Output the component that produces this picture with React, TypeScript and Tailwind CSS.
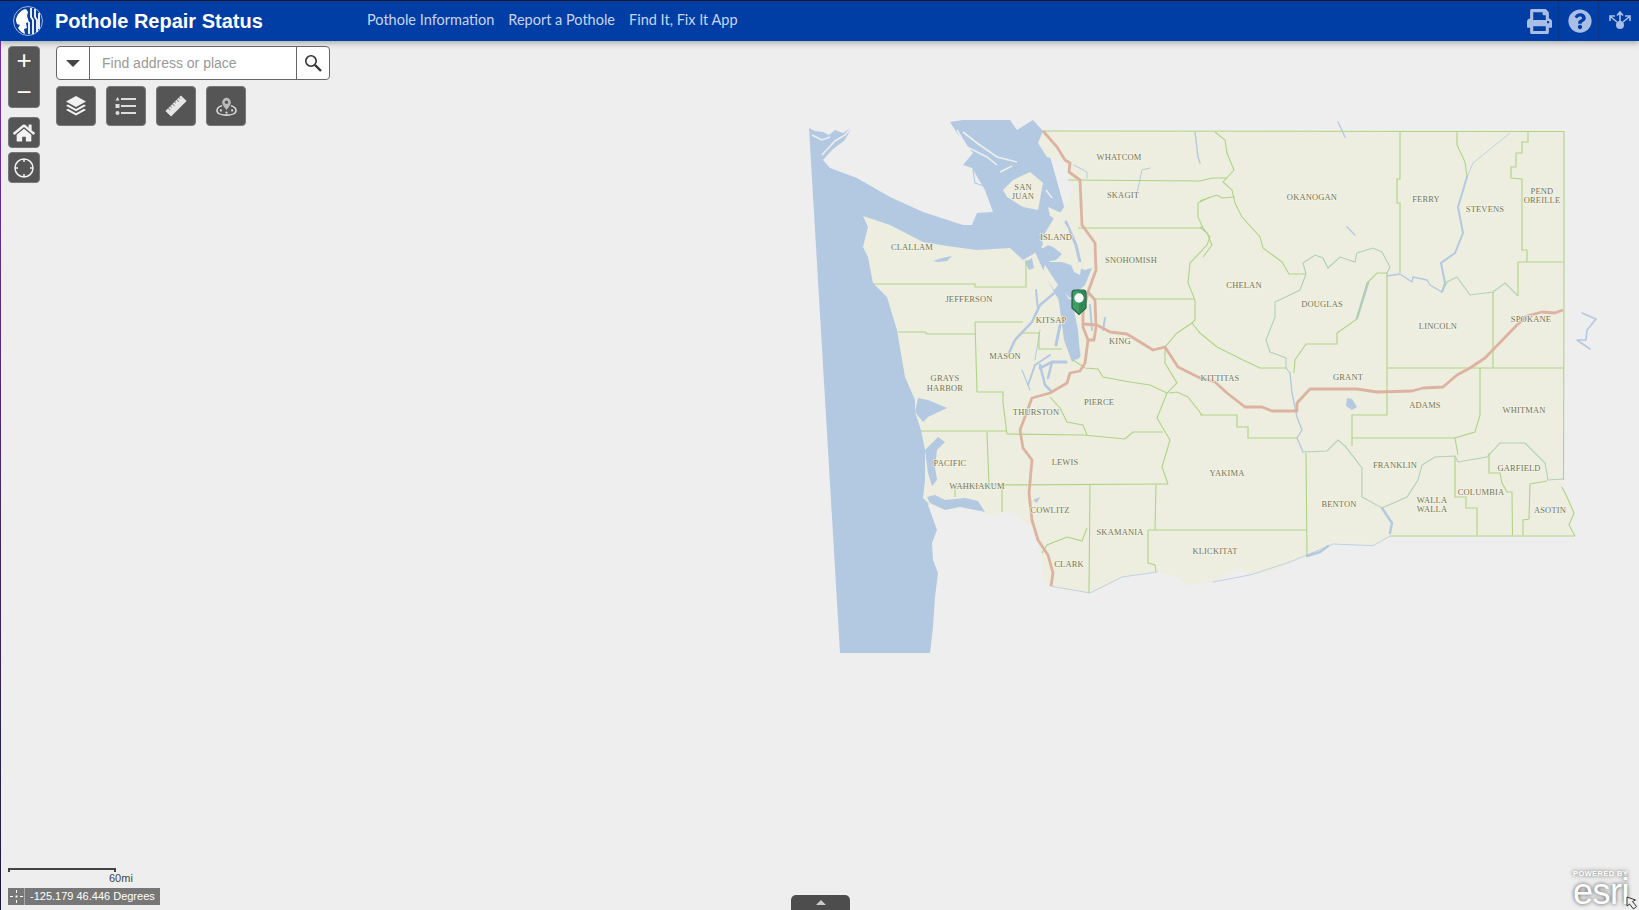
import React from "react";
import { FaHome, FaPrint, FaQuestionCircle } from "react-icons/fa";

const land =
  "1043,131 1564,131.5 1564,262 1563.5,480 1562,487 1567,497 1574,513 1569,525 1575,536 1390,536 1385,541 1373,545.7 1360,543 1333,544 1327,550 1307,556 1290,562 1275,571 1250,575 1238,569 1213,582 1187,586 1177,577 1157,572 1122,577 1110,585 1090,593 1067,590 1050,586 1043,580 1042,563 1038,543 1032,527 1013,513 1007,511 995,516 983,513 977,502 957,508 943,510 930,505 923,498 925,480 925,450 921,430 915,412 915,400 905,377 897,330 887,297 873,283 868,257 863,247 868,227 863,216 890,225 923,242 947,246 977,250 1010,248 1023,260 1040,250 1045,240 1060,213 1067,203 1073,187 1065,163 1047,157 1038,143";

const water =
  "809,128 815,131 823,132 829,135 835,130 843,133 852,127 845,140 832,150 823,160 830,168 857,178 890,197 923,212 963,225 972,225 977,213 993,212 985,190 972,168 963,165 973,153 957,133 950,122 963,120 1010,120 1017,130 1033,120 1043,131 1090,300 928,505 937,530 932,543 933,560 938,573 935,597 933,627 930,653 840,653";

const waterShapes = [
  "918,398 928,400 947,408 928,417 923,422 915,412",
  "925,450 938,437 945,442 937,450 935,467 937,480 932,486 928,473",
  "927,497 935,495 945,500 965,498 978,501 985,512 960,507 945,510 930,503",
  "1347,398 1352,399 1357,407 1352,410 1346,406",
  "1040,250 1060,238 1066,250 1056,260 1046,262",
  "933,261 942,258 952,256 947,261 938,262",
  "1025,262 1032,258 1034,268 1029,270",
  "1045,262 1062,262 1085,270 1092,268 1085,285 1070,298 1062,290",
  "1058,295 1072,300 1078,330 1080,355 1072,362 1064,340",
  "1033,500 1040,497 1037,503",
];

const channels: [string, number][] = [
  ["1040,252 1048,270 1058,290 1066,303 1070,320 1072,340 1076,355", 9],
  ["1066,222 1076,245 1080,262", 3],
  ["1058,290 1040,305 1032,322 1015,340 1008,355", 2.5],
  ["1036,290 1038,310", 2],
  ["1066,362 1052,362 1040,368", 3],
  ["1052,362 1048,378", 2.5],
  ["1050,355 1035,365 1028,385", 2],
  ["1040,365 1045,385 1052,392", 2.5],
  ["1022,370 1030,390", 1.2],
  ["1060,325 1056,345", 3],
  ["1090,305 1092,330", 2],
  ["1105,318 1103,330", 2],
  ["1074,165 1087,172 1087,178", 1],
  ["1150,168 1142,170 1137,193", 1],
  ["1195,132 1198,157 1200,163", 1.4],
  ["1338,122 1345,137", 1.4],
  ["1368,283 1357,318", 2.5],
  ["1467,177 1473,163 1510,133", 0.8],
  ["1467,177 1458,207 1463,233 1455,253 1441,263 1445,283 1442,292", 2],
  ["1387,276 1400,274 1412,282 1413,277 1427,280 1430,285 1442,292", 1.4],
  ["1347,227 1355,235", 1.4],
  ["1582,313 1596,319 1587,330 1586,340 1577,340 1590,349", 1.6],
  ["1290,373 1292,393 1297,417 1302,430 1297,438 1303,452", 1.4],
  ["1382,508 1392,523 1390,533", 2.4],
  ["1307,556 1320,552 1328,546", 2.4],
  ["1040,330 1035,360", 1],
  ["1390,536 1373,545.7 1333,544 1290,562 1250,575 1213,582", 0.8],
  ["1157,572 1122,577 1090,593 1050,586", 0.8],
  ["973,170 975,183 990,188 998,210", 1.2],
];

const islands = [
  "1003,190 1013,180 1030,172 1043,183 1038,210 1023,207 1007,197",
  "1048,207 1066,215 1060,222 1050,216",
  "1057,213 1045,233 1042,243 1053,247 1067,258 1073,250 1068,228",
  "1045,265 1058,285 1054,290 1043,272",
  "1070,262 1082,262 1080,275 1074,272",
];

// thin light strands: gulf islands and the Vancouver Island shore
const strands = [
  "963,132 977,143 997,157 1017,162",
  "957,130 967,147 987,157 997,165",
  "1000,172 1012,166",
  "822,155 835,141 845,135 852,127",
  "812,135 822,140 830,137",
  "1046,190 1052,198",
];

const borders = [
  "1043,131 1564,131.5 1564,262 1563.5,480",
  "1390,536 1575,536",
  "1068,180 1200,181 1212,178 1227,178",
  "1215,132 1225,140 1227,153 1234,170 1223,182 1232,190 1235,203 1242,217 1260,237 1263,248 1282,262 1289,274 1306,274",
  "1078,228 1203,228",
  "1200,200.7 1217,195 1222,198 1235,197",
  "1210,197 1198,203 1198,217 1203,228 1210,237 1207,245 1190,263 1188,283 1195,300 1195,320 1192,323 1177,333 1165,347 1165,363 1177,383 1167,393 1157,418 1170,440 1162,467 1168,484",
  "1095,299 1195,299",
  "1200,227 1207,233 1212,245 1203,257",
  "1073,360 1085,368 1098,369 1103,377 1130,382 1150,385 1167,393",
  "1007,434 1083,435 1125,439 1133,432 1163,432",
  "1050,397 1060,408 1067,422 1083,425 1087,435",
  "977,392 1003,392 1003,403 1007,434",
  "921,431 1007,431",
  "987,432 989,485",
  "955,487 989,485 1168,484",
  "955,487 955,497",
  "1002,485 1002,512",
  "1090,485 1089,593",
  "1042,553 1047,545 1067,537 1082,541 1087,528",
  "1156,485 1155,530",
  "1148,530 1307,530",
  "1148,530 1148,563 1155,565 1156,572",
  "1306,453 1307,556",
  "1200,415 1237,415 1237,427 1248,427 1248,438 1297,438",
  "1169,393 1177,392 1188,397 1202,415",
  "1192,323 1200,333 1217,347 1243,360 1260,368 1286,368",
  "1295,360 1306,344 1337,344 1337,333 1357,319 1367,283 1377,273 1387,273",
  "1295,360 1294,373",
  "1387,273 1387,415 1352,415 1352,446",
  "1352,438 1455,438",
  "1480,368 1480,415 1475,432 1455,438 1458,455",
  "1387,368 1563,368",
  "1493,292 1493,368",
  "1400,132 1400,179 1397,179 1397,203 1400,203 1400,273",
  "1457,132 1457,145 1465,162 1467,177",
  "1518,296 1518,262 1563,262",
  "1528,132 1528,142 1522,142 1522,153 1516,153 1516,167 1511,167 1511,178 1522,179 1522,250 1527,250 1527,262",
  "873,284 975,284 975,287 1026,287 1026,260",
  "898,332 925,332 927,334 975,334",
  "975,322 1023,322",
  "975,322 977,392",
  "1022,333 1039,333 1039,349 1062,349",
  "1455,457 1455,497 1466,497 1466,508 1477,508 1477,535",
  "1489,453 1489,473 1500,473 1502,483 1507,492 1512,492 1512.500,535",
  "1547,481 1530,484 1529,519 1523,520 1523,535",
  "1562,487 1567,497 1574,513 1569,525 1575,536",
];

// rivers that double as county lines, a bit paler
const riverLines = [
  "1306,274 1303,263 1315,255 1323,258 1328,268 1340,257 1355,262 1357,253 1373,248 1382,252 1390,267 1387,273",
  "1306,274 1300,290 1275,302 1275,317 1266,340 1270,352 1286,358 1286,368 1290,373",
  "1303,452 1327,451 1338,440 1345,446 1362,468 1362,497 1382,508 1407,497 1418,480 1422,465 1435,457 1455,456 1458,462 1487,457 1500,443 1525,443 1545,463 1548,480 1563,479",
  "1442,292 1447,282 1457,277 1470,295 1493,292 1505,283 1518,296",
];

const highways = [
  "1043,131 1057,147 1065,160 1070,163 1069,172 1080,180 1082,225 1095,243 1096,270 1088,292 1083,313 1083,327 1088,340 1085,363 1080,371 1070,373 1067,383 1050,393 1032,398 1020,430 1023,448 1032,460 1029,493 1032,520 1038,540 1048,555 1053,573 1051,586",
  "1088,292 1095,300 1096,327 1094,340 1088,340",
  "1083,324 1097,325 1110,332 1127,334 1153,350 1165,347 1178,367 1200,378 1215,382 1227,393 1245,407 1262,407 1272,411 1297,411 1297,403 1310,389 1357,389 1377,392 1412,391 1423,388 1443,387 1457,375 1470,368 1485,358 1517,325 1527,316 1542,312 1555,313 1563,310",
];

const labels: [string, number, number][] = [
  ["WHATCOM", 1119, 157], ["SAN", 1023, 187], ["JUAN", 1023, 196], ["SKAGIT", 1123, 195],
  ["CLALLAM", 912, 247], ["ISLAND", 1056, 237], ["SNOHOMISH", 1131, 260], ["JEFFERSON", 969, 299],
  ["KITSAP", 1051, 320], ["MASON", 1005, 356], ["KING", 1120, 341], ["GRAYS", 945, 378],
  ["HARBOR", 945, 388], ["OKANOGAN", 1312, 197], ["FERRY", 1426, 199], ["STEVENS", 1485, 209],
  ["PEND", 1542, 191], ["OREILLE", 1542, 200], ["CHELAN", 1244, 285], ["DOUGLAS", 1322, 304],
  ["LINCOLN", 1438, 326], ["SPOKANE", 1531, 319], ["GRANT", 1348, 377], ["KITTITAS", 1220, 378],
  ["ADAMS", 1425, 405], ["WHITMAN", 1524, 410], ["YAKIMA", 1227, 473], ["FRANKLIN", 1395, 465],
  ["GARFIELD", 1519, 468], ["COLUMBIA", 1481, 492], ["WALLA", 1432, 500], ["WALLA", 1432, 509],
  ["BENTON", 1339, 504], ["ASOTIN", 1550, 510], ["KLICKITAT", 1215, 551], ["PIERCE", 1099, 402],
  ["THURSTON", 1036, 412], ["PACIFIC", 950, 463], ["LEWIS", 1065, 462], ["WAHKIAKUM", 977, 486],
  ["COWLITZ", 1050, 510], ["SKAMANIA", 1120, 532], ["CLARK", 1069, 564],
];

function WashingtonMap() {
  return (
    <svg className="absolute left-0 top-0 h-[910px] w-[1639px]" viewBox="0 0 1639 910">
      <polygon points={water} fill="#b3c9e1" />
      <polygon points={land} fill="#edeee0" />
      {waterShapes.map((p, i) => (
        <polygon key={i} points={p} fill="#b3c9e1" />
      ))}
      {channels.map(([p, w], i) => (
        <polyline key={i} points={p} fill="none" stroke="#b3c9e1" strokeWidth={w} strokeLinejoin="round" strokeLinecap="round" />
      ))}
      {islands.map((p, i) => (
        <polygon key={i} points={p} fill="#edeee0" />
      ))}
      {strands.map((p, i) => (
        <polyline key={i} points={p} fill="none" stroke="#eeeeee" strokeWidth="1.6" />
      ))}
      {borders.map((p, i) => (
        <polyline key={i} points={p} fill="none" stroke="#afd385" strokeWidth="1.1" />
      ))}
      {riverLines.map((p, i) => (
        <polyline key={i} points={p} fill="none" stroke="#b0d0b4" strokeWidth="1.1" />
      ))}
      {highways.map((p, i) => (
        <polyline key={i} points={p} fill="none" stroke="#dcb3a0" strokeWidth="2.8" strokeLinejoin="round" />
      ))}
      {labels.map(([t, x, y], i) => (
        <text
          key={i}
          x={x}
          y={y + 3}
          textAnchor="middle"
          fontSize="8.5"
          letterSpacing="0.15"
          fill="#757550"
          stroke="#f4f4ea"
          strokeWidth="1.2"
          paintOrder="stroke"
          style={{ fontFamily: "'Liberation Serif', serif" }}
        >
          {t}
        </text>
      ))}
      <path d="M1075 290h8a3 3 0 0 1 3 3v15l-7 6.500-7-6.500v-15a3 3 0 0 1 3-3z" fill="#3f9e63" stroke="#1f5f45" strokeWidth="1.2" />
      <path d="M1079 290.500h4a2.500 2.500 0 0 1 2.500 2.500v15l-6.500 6z" fill="#2f8a55" />
      <circle cx="1079" cy="298" r="4.700" fill="#fff" />
    </svg>
  );
}

function SeattleLogo() {
  return (
    <svg width="32" height="32" viewBox="0 0 32 32">
      <circle cx="16" cy="16" r="14.500" fill="#0a3fa0" stroke="#9fb6e0" strokeWidth="1" />
      <path d="M4 16c0-5 4-11 10-12l2 3-1 4 2 6-3 1 1 5-3 1 1 5c-3-1-5-3-7-6l2-3-3-1z" fill="#fff" />
      <path d="M19 3v9l2 3v14M23 4v8l2 3v12M27 8v16M17 17v12" fill="none" stroke="#fff" strokeWidth="1.800" />
    </svg>
  );
}

function ShareIcon() {
  return (
    <svg width="24" height="24" viewBox="0 0 24 24" fill="#a9bee5" stroke="#a9bee5">
      <circle cx="12" cy="16" r="4" stroke="none" />
      <path d="M12 13V4M9 6.500 12 3l3 3.500M9 13 3 8M2 12V7h5M15 13l6-5M22 12V7h-5" fill="none" strokeWidth="1.600" />
    </svg>
  );
}

function LayersIcon() {
  return (
    <svg width="22" height="22" viewBox="0 0 22 22" fill="#f2f2f2">
      <path d="M11 1 21 6.500 11 12 1 6.500z" />
      <path d="M3 9.500 11 14l8-4.500 2 1.200L11 16.300 1 10.700z" />
      <path d="M3 13.700 11 18.200l8-4.500 2 1.200L11 20.500 1 14.900z" />
    </svg>
  );
}

function ListIcon() {
  return (
    <svg width="22" height="20" viewBox="0 0 22 20" fill="#dddddd">
      <path d="M2.500 1 4.500 4.500h-4z" />
      <rect x="6" y="2" width="15" height="2" />
      <rect x="0.500" y="8" width="4" height="4" />
      <rect x="6" y="9" width="15" height="2" />
      <circle cx="2.500" cy="17" r="2" />
      <rect x="6" y="16" width="15" height="2" />
    </svg>
  );
}

function RulerIcon() {
  return (
    <svg width="24" height="24" viewBox="0 0 24 24">
      <g transform="rotate(-45 12 12)">
        <rect x="1" y="8" width="22" height="8" fill="#e6e6e6" />
        <path d="M5 8v3M8 8v2M11 8v3M14 8v2M17 8v3M20 8v2" stroke="#888" strokeWidth="1" />
      </g>
    </svg>
  );
}

function NearbyIcon() {
  return (
    <svg width="21" height="19" viewBox="0 0 24 22" fill="none" stroke="#dddddd">
      <path d="M7 10c-3 1-6 3-6 5.500C1 19 6 21 12 21s11-2 11-5.500c0-2.500-3-4.500-6-5.500" strokeWidth="1.800" />
      <path d="M12 15c-3-4-5-6-5-9a5 5 0 0 1 10 0c0 3-2 5-5 9z" fill="#bbbbbb" stroke="none" />
      <circle cx="12" cy="6" r="2" fill="#555" stroke="none" />
      <circle cx="5.500" cy="15.500" r="1.300" fill="#dddddd" stroke="none" />
      <circle cx="12" cy="18" r="1.300" fill="#dddddd" stroke="none" />
      <circle cx="18.500" cy="15.500" r="1.300" fill="#dddddd" stroke="none" />
    </svg>
  );
}

function LocateIcon() {
  return (
    <svg width="22" height="22" viewBox="0 0 22 22" fill="none" stroke="#f2f2f2" strokeWidth="1.500">
      <circle cx="11" cy="11" r="9" />
      <path d="M11 2v3M11 17v3M2 11h3M17 11h3" />
    </svg>
  );
}

function ToolButton({ children }: { children: React.ReactNode }) {
  return (
    <div className="flex h-10 w-10 items-center justify-center rounded-[4px] border border-[#777] bg-[#555]">
      {children}
    </div>
  );
}

function ToolStack({ children }: { children: React.ReactNode }) {
  return <div className="flex h-[31px] w-[32px] items-center justify-center rounded-[4px] border border-[#777] bg-[#555]">{children}</div>;
}

export default function App() {
  return (
    <div className="relative h-[910px] w-[1639px] overflow-hidden bg-[#eeeeee] font-['Liberation_Sans',sans-serif]">
      <WashingtonMap />

      <div className="absolute left-0 top-0 h-full w-px bg-gradient-to-b from-[#7a2fb5] to-[#1a1a3a]" />

      <header className="absolute left-0 top-0 flex h-[41px] w-full items-center border-t border-[#1a1a2a] bg-[#003da5] pl-[12px] shadow-[0_2px_6px_rgba(0,0,0,0.3)]">
        <SeattleLogo />
        <h1 className="ml-[11px] w-[312px] text-[20px] font-bold leading-none text-white">Pothole Repair Status</h1>
        <nav className="-mt-[2px] flex gap-[14px] font-['Lato',sans-serif] text-[14.5px] text-[#c8d5ee]">
          <span>Pothole Information</span>
          <span>Report a Pothole</span>
          <span>Find It, Fix It App</span>
        </nav>
        <div className="ml-auto flex h-full items-center">
          <div className="flex h-full w-[40px] items-center justify-center border-r border-[#0a3488] pl-[2px] text-[#a9bee5]">
            <FaPrint size={25} />
          </div>
          <div className="flex h-full w-[40px] items-center justify-center border-r border-[#0a3488] pl-[2px] text-[#a9bee5]">
            <FaQuestionCircle size={24} />
          </div>
          <div className="flex h-full w-[40px] items-center justify-center pl-[2px]">
            <ShareIcon />
          </div>
        </div>
      </header>

      <div className="absolute left-[8px] top-[46px] flex flex-col">
        <div className="flex h-[62px] w-[32px] flex-col rounded-[4px] border border-[#777] bg-[#555] text-white">
          <div className="flex flex-1 items-center justify-center pb-[6px] text-[26px] font-light leading-none">+</div>
          <div className="flex flex-1 items-center justify-center pb-[3px] text-[26px] font-light leading-none">−</div>
        </div>
        <div className="mt-[9px] flex flex-col gap-[4px]">
          <ToolStack>
            <FaHome size={22} color="#f2f2f2" />
          </ToolStack>
          <ToolStack>
            <LocateIcon />
          </ToolStack>
        </div>
      </div>

      <div className="absolute left-[56px] top-[46px] flex flex-col gap-[6px]">
        <div className="flex h-[34px] w-[274px] rounded-[4px] border border-[#666] bg-white">
          <div className="flex w-[33px] items-center justify-center border-r border-[#666]">
            <div className="h-0 w-0 border-x-[7px] border-t-[7px] border-x-transparent border-t-[#444]" />
          </div>
          <div className="flex flex-1 items-center pl-[12px] text-[14px] text-[#999]">Find address or place</div>
          <div className="flex w-[33px] items-center justify-center border-l border-[#666]">
            <svg width="18" height="18" viewBox="0 0 18 18" fill="none" stroke="#333">
              <circle cx="7" cy="7" r="5.200" strokeWidth="1.600" />
              <path d="m11 11 6 6" strokeWidth="2.400" />
            </svg>
          </div>
        </div>
        <div className="flex gap-[10px]">
          <ToolButton>
            <LayersIcon />
          </ToolButton>
          <ToolButton>
            <ListIcon />
          </ToolButton>
          <ToolButton>
            <RulerIcon />
          </ToolButton>
          <ToolButton>
            <NearbyIcon />
          </ToolButton>
        </div>
      </div>

      <div className="absolute bottom-[5px] left-[8px] flex flex-col">
        <div className="h-[4px] w-[108px] border-x-2 border-t-2 border-[#444]" />
        <div className="ml-[101px] -mt-[1px] text-[11px] leading-[14px] text-[#444]">60mi</div>
        <div className="mt-[3px] flex h-[17px] w-[152px] items-center bg-[#777] text-[11px] font-normal text-white">
          <div className="flex h-full w-[17px] items-center justify-center border-r border-[#aaa]">
            <svg width="13" height="13" viewBox="0 0 13 13" stroke="#fff" fill="#fff">
              <path d="M0 6.500h3M10 6.500h3M6.500 0v3M6.500 10v3" />
              <rect x="5.500" y="5.500" width="2" height="2" stroke="none" />
            </svg>
          </div>
          <span className="pl-[5px]">-125.179 46.446 Degrees</span>
        </div>
      </div>

      <div className="absolute bottom-0 left-[791px] flex h-[15px] w-[59px] justify-center rounded-t-[5px] bg-[#4d4d4d] pt-[5px] shadow-[0_0_2px_rgba(255,255,255,0.8)]">
        <div className="h-0 w-0 border-x-[5px] border-b-[5px] border-x-transparent border-b-[#cccccc]" />
      </div>

      <div className="absolute bottom-[4px] left-[1573px] flex w-[62px] flex-col items-start text-white [text-shadow:0_0_4px_rgba(0,0,0,0.7)]">
        <span className="text-[7.5px] font-bold leading-[8px] tracking-[0.4px]">POWERED BY</span>
        <span className="text-[36px] leading-[28px] tracking-[-0.5px]">esri</span>
      </div>

      <svg className="absolute bottom-0 right-0" width="13" height="14" viewBox="0 0 13 14" fill="#eeeeee" stroke="#333" strokeWidth="1">
        <path d="M1 1v9l2.500-2 4 5 3-2.500-4-5 3-1.500z" />
      </svg>
    </div>
  );
}
